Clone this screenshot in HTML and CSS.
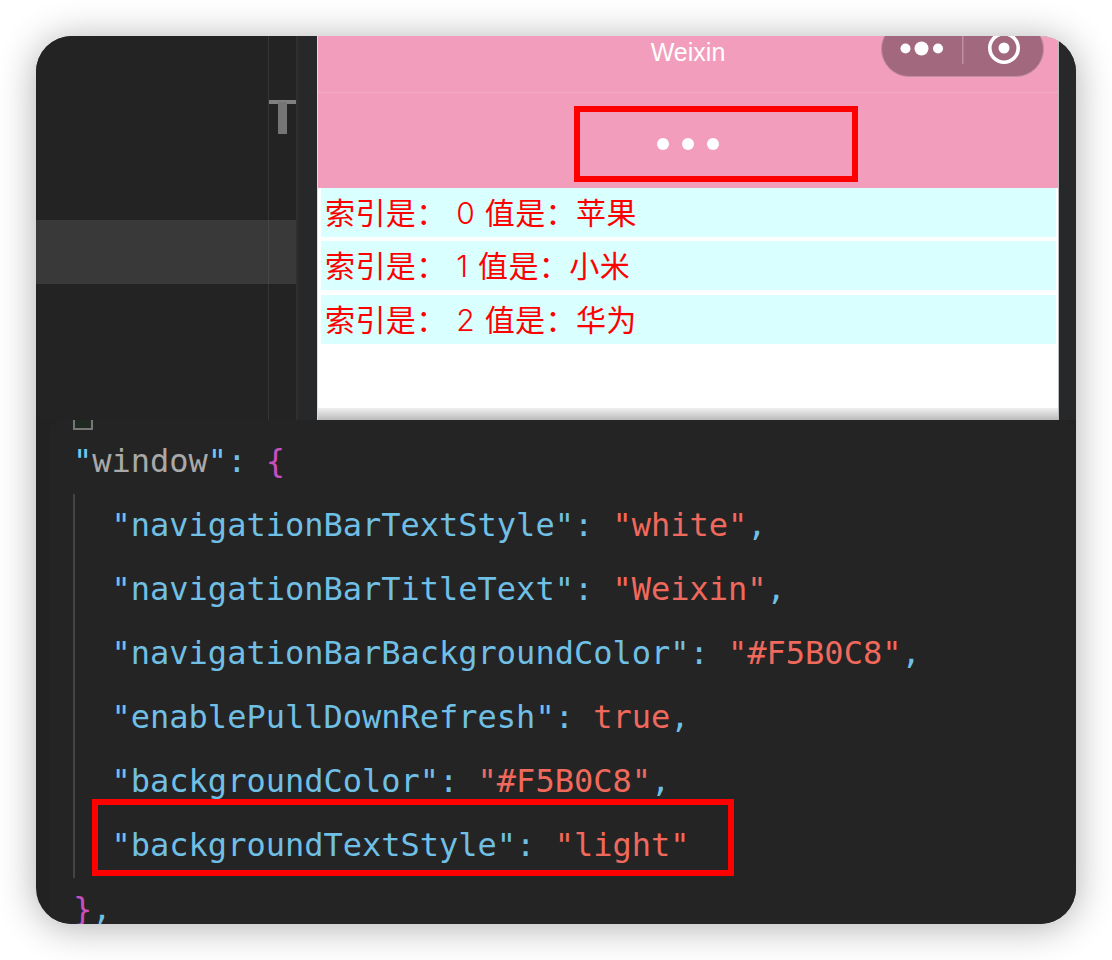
FILE: index.html
```html
<!DOCTYPE html>
<html lang="zh-CN">
<head>
<meta charset="utf-8">
<title>Weixin</title>
<link rel="stylesheet" href="styles.css">
</head>
<body>
<main class="card">
  <section class="top">
    <aside class="sidebar">
      <div class="tree">
        <div class="tree-band"></div>
      </div>
      <div class="minimap">
        <div class="t-bar"></div>
        <div class="t-stem"></div>
      </div>
    </aside>
    <div class="gutter"></div>
    <div class="phone">
      <header class="nav">
        <span class="nav-title">Weixin</span>
        <div class="capsule">
          <svg class="capsule-icon" width="163" height="56" viewBox="0 0 163 56" aria-hidden="true">
            <circle cx="24.5" cy="27.5" r="5" fill="#fff"/>
            <circle cx="40.5" cy="27.5" r="7" fill="#fff"/>
            <circle cx="57" cy="27.5" r="5" fill="#fff"/>
            <rect x="81" y="14" width="1.5" height="29" fill="#c08ea2"/>
            <circle cx="123" cy="27" r="14.2" fill="none" stroke="#fff" stroke-width="3.6"/>
            <circle cx="123" cy="27" r="5.5" fill="#fff"/>
          </svg>
        </div>
      </header>
      <div class="refresh">
        <div class="dots"><i></i><i></i><i></i></div>
      </div>
      <div class="list">
        <div class="row">索引是： <span class="num">0</span> 值是：苹果</div>
        <div class="row">索引是： <span class="num">1</span> 值是：小米</div>
        <div class="row">索引是： <span class="num">2</span> 值是：华为</div>
      </div>
      <div class="phone-fade"></div>
    </div>
    <div class="gutter-right"></div>
    <div class="mark mark-refresh"></div>
  </section>
  <section class="code">
    <div class="checkbox"></div>
    <div class="guide"></div>
    <pre class="source"><span class="q">"</span><span class="g">window</span><span class="q">"</span><span class="k">: </span><span class="b">{</span>
  <span class="k">"navigationBarTextStyle": </span><span class="s">"white"</span><span class="k">,</span>
  <span class="k">"navigationBarTitleText": </span><span class="s">"Weixin"</span><span class="k">,</span>
  <span class="k">"navigationBarBackgroundColor": </span><span class="s">"#F5B0C8"</span><span class="k">,</span>
  <span class="k">"enablePullDownRefresh": </span><span class="s">true</span><span class="k">,</span>
  <span class="k">"backgroundColor": </span><span class="s">"#F5B0C8"</span><span class="k">,</span>
  <span class="k">"backgroundTextStyle": </span><span class="s">"light"</span>
<span class="b">}</span><span class="k">,</span></pre>
    <div class="mark mark-code"></div>
  </section>
</main>
</body>
</html>
```
FILE: styles.css
```css
* { box-sizing: border-box; }
html, body { margin: 0; height: 960px; overflow: hidden; background: #fff; }
body { padding: 36px; }

.card {
  position: relative;
  height: 888px;
  display: flex;
  flex-direction: column;
  background: #222;
  border-radius: 36px;
  overflow: hidden;
  box-shadow: 0 3px 38px rgba(0, 0, 0, .32);
}

.top { position: relative; display: flex; height: 384px; flex: none; }

.sidebar { width: 262px; display: flex; flex: none; background: #232323; border-right: 2px solid #2f2f2f; }
.tree { width: 233px; flex: none; padding-top: 184px; border-right: 1px solid #353535; }
.tree-band { height: 64px; background: #393939; box-shadow: 1px 0 0 #464646; }
.minimap { flex: 1; padding-top: 64px; display: flex; flex-direction: column; align-items: center; position: relative; }
.minimap::after { content: ""; position: absolute; left: 0; right: 0; top: 184px; height: 64px; background: #393939; }
.t-bar { width: 100%; height: 4px; background: #808080; }
.t-stem { width: 9px; height: 32px; margin-top: -2px; background: #757575; }

.gutter { width: 19px; flex: none; background: #26282a; }
.gutter-right { width: 17px; flex: none; background: #26282a; }

.phone { width: 742px; flex: none; background: #fff; display: flex; flex-direction: column; position: relative; border-left: 1px solid #ddd; border-right: 1px solid #bbb; }

.nav { position: relative; height: 57px; flex: none; background: #f19dbb; border-bottom: 1px solid #f4abc5; display: flex; align-items: flex-start; justify-content: center; }
.nav-title { font: 25px/32px "Liberation Sans", Arial, sans-serif; color: #fff; }
.capsule { position: absolute; left: 563px; top: -15px; width: 163px; height: 56px; background: #a2687e; border: 1px solid #c08ea2; border-radius: 28px; overflow: hidden; }
.capsule-icon { display: block; margin: -1px; }

.refresh { height: 95px; flex: none; background: #f19dbb; display: flex; align-items: center; justify-content: center; }
.dots { display: flex; gap: 13px; margin-top: 7px; }
.dots i { display: block; width: 12px; height: 12px; border-radius: 50%; background: #fff; }

.list { padding: 0 2px 0 3px; display: flex; flex-direction: column; gap: 4.25px; }
.row { height: 49px; padding-left: 4px; background: #d9ffff; color: #f00; font: 400 30px/47px "Noto Sans CJK SC", sans-serif; letter-spacing: .4px; white-space: nowrap; }
.num { margin: 0 2.5px; font-family: Inter, sans-serif; font-weight: 300; }

.phone-fade { position: absolute; left: 0; right: 0; bottom: 0; height: 12px; background: linear-gradient(#f0f0f0, #bbb); }

.mark { position: absolute; border: 6px solid #f00; }
.mark-refresh { left: 538px; top: 70px; width: 284px; height: 76px; }

.code { position: relative; flex: 1; margin-left: 13px; padding: 9px 0 0 24px; background: #242424; border-radius: 12px 12px 0 0; }
.checkbox { position: absolute; left: 24px; top: 0; width: 20px; height: 10px; background: #1f2a20; border: 2px solid #777; border-top: 0; }
.guide { position: absolute; left: 24px; top: 74px; width: 2px; height: 384px; background: #444; }
.source { margin: 0; font: 32px/64px "DejaVu Sans Mono", monospace; color: #70bfe4; }
.k { color: #70bfe4; }
.q { color: #6ec8f5; }
.g { color: #a9a9a9; }
.s { color: #f0695c; }
.b { color: #c94fc0; }
.mark-code { left: 43px; top: 379px; width: 642px; height: 77px; }
```
